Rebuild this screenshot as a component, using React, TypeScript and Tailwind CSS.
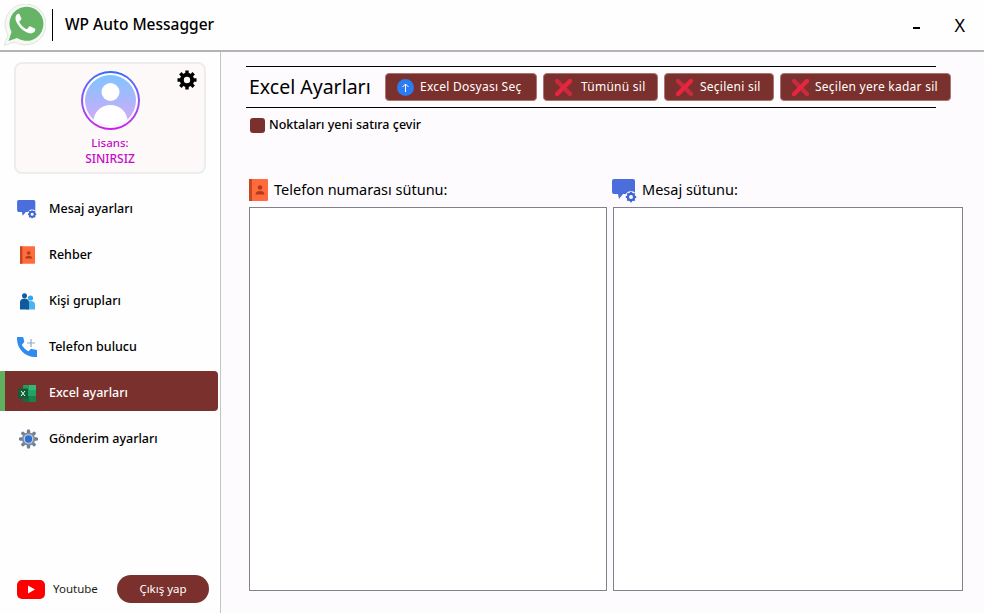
import type { ReactNode } from 'react';

const FONT = "font-['Noto_Sans','Open_Sans',sans-serif]";

function WhatsappLogo() {
  return (
    <svg viewBox="0 0 42 42" className="h-[42px] w-[42px]" aria-hidden>
      <path d="M0 41.500l4-10.500A20.500 20.500 0 1 1 11 38z" fill="#f6f8f6" stroke="#e2e5e2" strokeWidth="1" />
      <path d="M4.500 37l3-9A17 17 0 1 1 13 34z" fill="#66b566" />
      <path
        d="M14.500 9.500c-2 .8-3.300 3-3 5.500.8 5.500 7.600 13 14 14.300 2.800.5 5.100-1 5.700-3 .3-.9.100-1.400-.5-1.800l-4.200-2.100c-.6-.3-1.100-.1-1.500.4l-1.500 1.900c-.4.400-.8.500-1.300.3-2.800-1.300-5.200-3.600-6.700-6.400-.3-.5-.1-.9.100-1.300l1.400-1.600c.4-.4.400-.9.300-1.400l-1.800-4.100c-.4-.8-.9-.9-1.700-.7z"
        fill="#fff"
      />
    </svg>
  );
}

function MessageIcon({ className }: { className: string }) {
  return (
    <svg viewBox="0 0 25 24" className={className} aria-hidden>
      <path
        d="M2 0h19a2 2 0 0 1 2 2v11a2 2 0 0 1-2 2H11l-4 5-1-5H2a2 2 0 0 1-2-2V2a2 2 0 0 1 2-2z"
        fill="#4a6fdc"
      />
      <circle cx="19" cy="18" r="6" fill="#fdfbfd" />
      <circle cx="19" cy="18" r="3.200" fill="none" stroke="#3f66d6" strokeWidth="2.400" />
      <path
        d="M19 12.800v2M19 21.200v2M13.800 18h2M22.200 18h2M15.300 14.300l1.400 1.400M21.300 20.300l1.400 1.400M15.300 21.700l1.400-1.400M21.300 15.700l1.400-1.400"
        stroke="#3f66d6"
        strokeWidth="1.800"
      />
    </svg>
  );
}

function ContactsIcon({ className }: { className: string }) {
  return (
    <svg viewBox="0 0 19 22" className={className} aria-hidden>
      <rect width="19" height="22" rx="1" fill="#ff6b3d" />
      <rect width="3" height="22" fill="#c9471f" />
      <circle cx="11" cy="8.500" r="2.300" fill="#b23c18" />
      <path d="M6.500 15.500c0-2.500 2-3.500 4.500-3.500s4.500 1 4.500 3.500z" fill="#b23c18" />
    </svg>
  );
}

function GroupsIcon() {
  return (
    <svg viewBox="0 0 15 17" className="h-[17px] w-[15px]" aria-hidden>
      <circle cx="10.500" cy="5" r="2.600" fill="#2ea8e8" />
      <path d="M6 16.500V11c0-2 2-3 4.500-3S15 9 15 11v5.500z" fill="#45b6ee" />
      <circle cx="4.500" cy="2.700" r="2.500" fill="#0f5c9e" />
      <path d="M0 16.500V9c0-2.200 2-3.500 4.500-3.500S9 6.800 9 9v7.500z" fill="#11599a" />
    </svg>
  );
}

function PhonePlusIcon() {
  return (
    <svg viewBox="0 0 20 20" className="h-5 w-5" aria-hidden>
      <path
        d="M1 0h4.500c.5 0 .8.300.9.800l.8 3.700c.1.400 0 .7-.3 1L4.800 7.700c1.400 2.800 3.700 5.100 6.600 6.600l2.200-2.100c.3-.3.700-.4 1-.3l4.400.9c.5.100 1 .4 1 1V20h-2C8.200 20 0 11.800 0 2V1c0-.6.400-1 1-1z"
        fill="#2f8bf0"
      />
      <path d="M14 2v8M10 6h8" stroke="#8fa9c9" strokeWidth="1.200" />
    </svg>
  );
}

function ExcelIcon() {
  return (
    <svg viewBox="0 0 18 17" className="h-[17px] w-[18px]" aria-hidden>
      <rect x="5" y="0" width="13" height="17" rx="1" fill="#1f9e5c" />
      <rect x="11" y="0" width="7" height="5.500" fill="#35b877" />
      <rect x="11" y="5.500" width="7" height="5.500" fill="#1fa263" />
      <rect x="5" y="11" width="6" height="6" fill="#17693f" />
      <rect x="11" y="11" width="7" height="6" fill="#1c7f4e" />
      <rect x="0" y="3.500" width="10" height="10" rx="1" fill="#0f5e37" />
      <path d="M3 6l4 5M7 6l-4 5" stroke="#fff" strokeWidth="1" />
    </svg>
  );
}

function SendGearIcon() {
  return (
    <svg viewBox="0 0 22 20" className="ml-[3px] h-5 w-[21px]" aria-hidden>
      <path
        d="M11 .8v18.400M1.800 10h18.400M4.500 3.500l13 13M4.500 16.500l13-13"
        stroke="#6f8092"
        strokeWidth="4"
        strokeLinecap="round"
      />
      <circle cx="11" cy="10" r="7.600" fill="#7d8d9d" />
      <circle cx="11" cy="10" r="5.600" fill="#c6cfd8" />
      <circle cx="11" cy="10" r="4.200" fill="#2f6fd6" />
    </svg>
  );
}

function UploadIcon() {
  return (
    <svg viewBox="0 0 17 17" className="h-[17px] w-[17px] shrink-0" aria-hidden>
      <circle cx="8.500" cy="8.500" r="8.500" fill="#2b7bf2" />
      <path d="M8.500 13V5M5.500 8l3-3 3 3" fill="none" stroke="#fff" strokeWidth="1" />
    </svg>
  );
}

function RedCross() {
  return (
    <svg viewBox="0 0 17 17" className="h-[17px] w-[17px] shrink-0" aria-hidden>
      <path d="M2 2l13 13" stroke="#c92a40" strokeWidth="4.400" strokeLinecap="square" />
      <path d="M15 2L2 15" stroke="#e8243f" strokeWidth="4.400" strokeLinecap="square" />
    </svg>
  );
}

function GearIcon() {
  return (
    <svg viewBox="0 0 20 20" className="h-5 w-5" aria-hidden>
      <circle cx="10" cy="10" r="5.200" fill="none" stroke="#000" strokeWidth="4" />
      <path
        d="M10 .5v4M10 15.500v4M.5 10h4M15.500 10h4M3.300 3.300l2.800 2.800M13.900 13.900l2.800 2.800M3.300 16.700l2.800-2.800M13.900 6.100l2.800-2.800"
        stroke="#000"
        strokeWidth="3.400"
      />
    </svg>
  );
}

function Avatar() {
  return (
    <div className="h-[59px] w-[59px] rounded-full bg-gradient-to-b from-[#2f6bff] to-[#c81ee8] p-[2px]">
      <div className="h-full w-full rounded-full bg-white p-[2px]">
        <svg viewBox="0 0 51 51" className="h-full w-full" aria-hidden>
          <defs>
            <linearGradient id="avatarFill" x1="0" y1="0" x2="0" y2="1">
              <stop offset="0" stopColor="#7fc4ff" />
              <stop offset="1" stopColor="#d9a9f7" />
            </linearGradient>
            <clipPath id="avatarClip">
              <circle cx="25.500" cy="25.500" r="25.500" />
            </clipPath>
          </defs>
          <circle cx="25.500" cy="25.500" r="25.500" fill="url(#avatarFill)" />
          <g clipPath="url(#avatarClip)">
            <circle cx="25.500" cy="17" r="9" fill="#fff" />
            <ellipse cx="25.500" cy="46" rx="17" ry="16" fill="#fff" />
          </g>
        </svg>
      </div>
    </div>
  );
}

const MENU: { label: string; icon: ReactNode; active?: boolean; labelClass?: string }[] = [
  { label: 'Mesaj ayarları', icon: <MessageIcon className="h-[19px] w-5" /> },
  { label: 'Rehber', icon: <ContactsIcon className="h-[18px] w-[15px]" /> },
  { label: 'Kişi grupları', icon: <GroupsIcon /> },
  { label: 'Telefon bulucu', icon: <PhonePlusIcon /> },
  { label: 'Excel ayarları', icon: <ExcelIcon />, active: true },
  { label: 'Gönderim ayarları', icon: <SendGearIcon />, labelClass: '-ml-px' },
];

const ACTIONS = [
  { label: 'Excel Dosyası Seç', box: 'w-[152px] gap-[6px] pl-[11px]', upload: true },
  { label: 'Tümünü sil', box: 'w-[115px] gap-[9px] pl-[11px]' },
  { label: 'Seçileni sil', box: 'w-[110px] gap-[7px] pl-[11px]' },
  { label: 'Seçilen yere kadar sil', box: 'w-[171px] gap-[6px] pl-[11px]' },
];

export default function App() {
  return (
    <div className={`flex h-[613px] w-[984px] flex-col overflow-hidden bg-[#fdfbfd] text-black ${FONT}`}>
      {/* Title bar */}
      <header className="flex h-[52px] shrink-0 items-center border-b-2 border-[#b4b4b4] bg-[#fdfefd] pl-1">
        <WhatsappLogo />
        <div className="ml-[6px] h-8 w-px bg-black" />
        <span className="ml-[12px] text-[15.500px] font-medium">WP Auto Messagger</span>
        <span className="ml-auto h-[2px] w-[7px] translate-y-[3px] bg-black" />
        <span className="mr-[19px] ml-[34px] text-[18px]">X</span>
      </header>

      <div className="flex min-h-0 flex-1">
        {/* Sidebar */}
        <aside className="flex w-[221px] shrink-0 flex-col border-r border-[#c4c4c4] bg-[#fdfefd] pt-[10px]">
          <div className="relative mx-[14px] flex h-[112px] w-[192px] flex-col items-center rounded-lg border-2 border-[#efecef] bg-[#fdf9f9] pt-[7px]">
            <Avatar />
            <span className="mt-[6px] text-[11.500px] leading-[14px] font-medium text-[#c40cc8]">Lisans:</span>
            <span className="text-[12px] leading-[17px] font-medium text-[#c40cc8]">SINIRSIZ</span>
            <div className="absolute top-[6px] right-[7px]">
              <GearIcon />
            </div>
          </div>

          <nav className="mt-[13px] flex flex-col gap-[6px]">
            {MENU.map(({ label, icon, active, labelClass }) => (
              <div
                key={label}
                className={
                  active
                    ? 'flex h-10 w-[218px] items-center rounded-r border-l-[5px] border-[#5fb15f] bg-[#7a302c] pt-[4px] pl-[11px] text-white'
                    : 'flex h-10 items-center pt-[4px] pl-4'
                }
              >
                <span className="flex w-[22px] shrink-0 justify-center">{icon}</span>
                <span className={`ml-[11px] text-[12.500px] font-medium ${labelClass ?? ''}`}>{label}</span>
              </div>
            ))}
          </nav>

          <div className="mt-auto mb-[10px] flex items-center pl-[17px]">
            <svg viewBox="0 0 28 19" className="h-[19px] w-7" aria-hidden>
              <rect width="28" height="19" rx="5" fill="#ff0000" />
              <path d="M11 5.500l7 4-7 4z" fill="#fff" />
            </svg>
            <span className="ml-2 text-[11.500px] text-[#1c1c1c]">Youtube</span>
            <button className="mr-[11px] ml-auto h-7 w-[92px] rounded-full bg-[#7a302c] text-[11.500px] text-white">
              Çıkış yap
            </button>
          </div>
        </aside>

        {/* Content */}
        <main className="min-w-0 flex-1 pt-[14px] pl-[25px]">
          <div className="flex h-[42px] w-[690px] items-center border-y border-black pl-[3px]">
            <h1 className="w-[136px] shrink-0 text-[19.500px] leading-none font-normal">Excel Ayarları</h1>
            <div className="flex shrink-0 gap-[6px]">
              {ACTIONS.map(({ label, box, upload }) => (
                <button
                  key={label}
                  className={`flex h-7 items-center rounded border border-[#a87673] bg-[#7a302c] text-[12px] tracking-[0.25px] text-white ${box}`}
                >
                  {upload ? <UploadIcon /> : <RedCross />}
                  <span>{label}</span>
                </button>
              ))}
            </div>
          </div>

          <label className="mt-[8px] flex items-center pl-1">
            <span className="h-[15px] w-[15px] rounded-[3px] bg-[#7a302c]" />
            <span className="ml-1 text-[12.500px] font-medium">Noktaları yeni satıra çevir</span>
          </label>

          <div className="mt-[44px] flex gap-[6px] pl-[3px]">
            <section className="w-[358px]">
              <div className="flex h-[28px] items-start">
                <div className="flex h-[22px] items-center">
                  <ContactsIcon className="h-[22px] w-[19px]" />
                  <span className="ml-[6px] text-[14.500px]">Telefon numarası sütunu:</span>
                </div>
              </div>
              <div className="h-[384px] border border-[#82828c] bg-white" />
            </section>
            <section className="w-[350px]">
              <div className="flex h-[28px] items-start">
                <MessageIcon className="h-6 w-[25px] -translate-x-px" />
                <span className="ml-[4px] flex h-[22px] items-center text-[14.500px]">Mesaj sütunu:</span>
              </div>
              <div className="h-[384px] border border-[#82828c] bg-white" />
            </section>
          </div>
        </main>
      </div>
    </div>
  );
}
